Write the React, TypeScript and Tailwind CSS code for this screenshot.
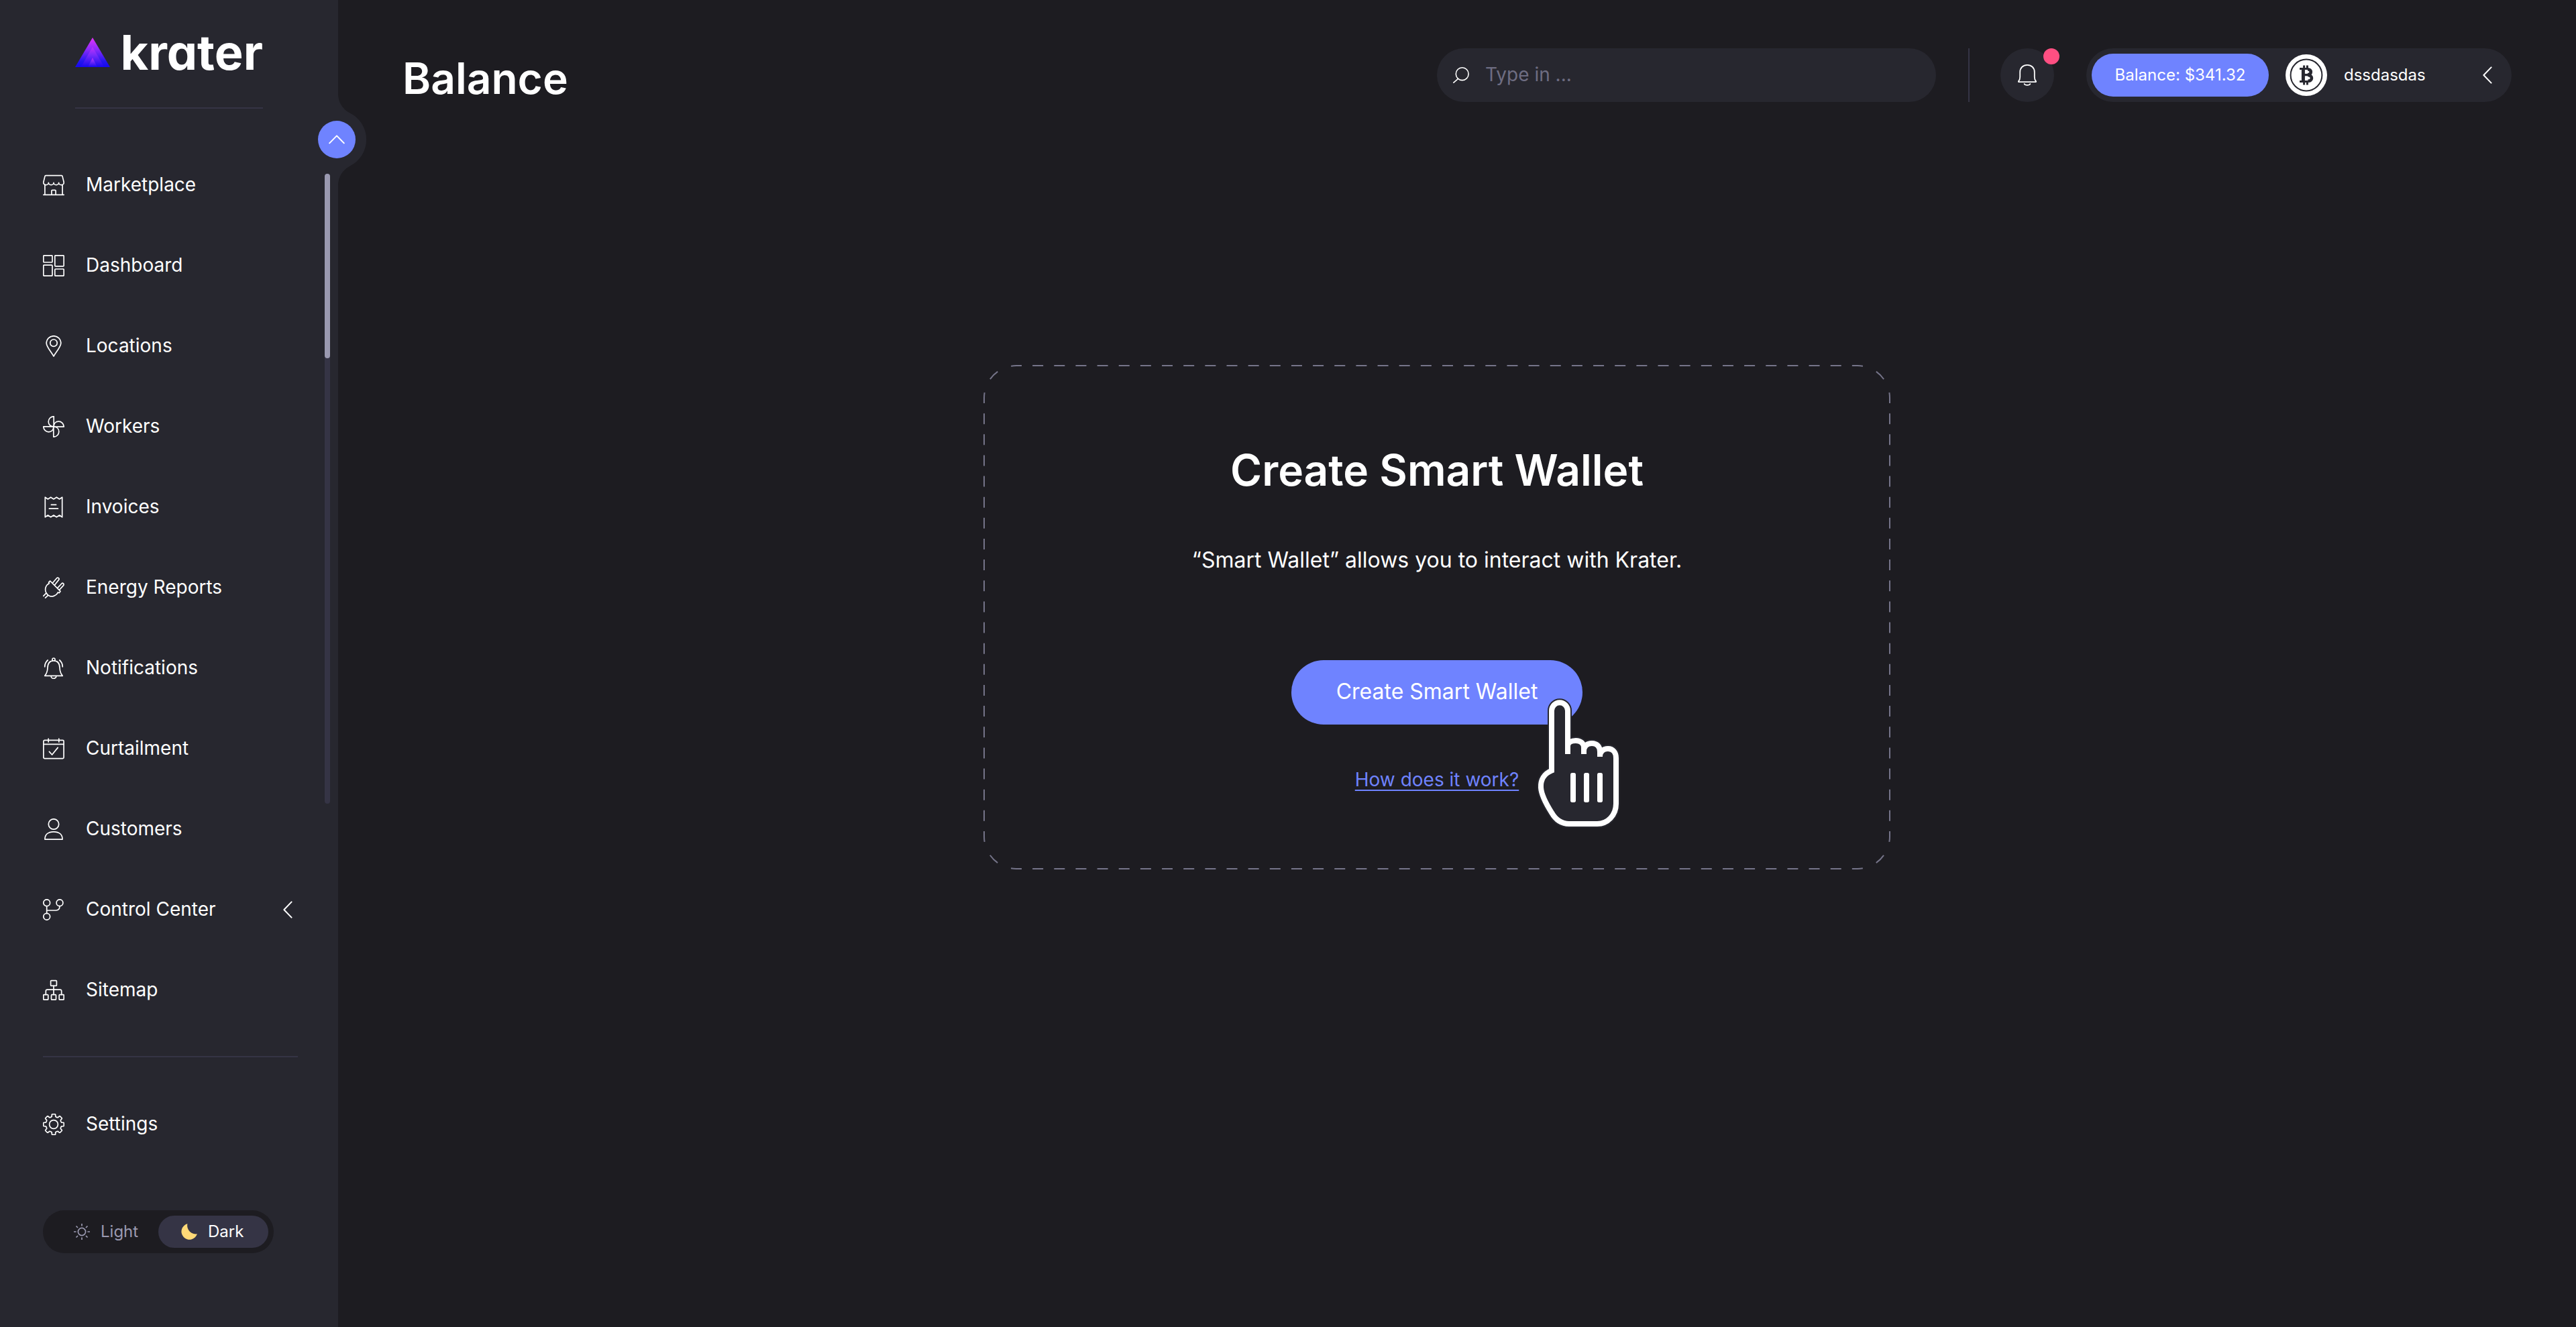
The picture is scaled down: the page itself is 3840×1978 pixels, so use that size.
import type { ReactNode } from "react";

function Icon({ children, size = 32, className = "size-8" }: { children: ReactNode; size?: number; className?: string }) {
  return (
    <svg
      viewBox={`0 0 ${size} ${size}`}
      className={`shrink-0 ${className}`}
      fill="none"
      stroke="currentColor"
      strokeWidth="1.7"
      strokeLinecap="round"
      strokeLinejoin="round"
      aria-hidden="true"
    >
      {children}
    </svg>
  );
}

function gearPath() {
  const point = (radius: number, degrees: number) => {
    const a = ((degrees - 90) * Math.PI) / 180;
    return `${(16 + radius * Math.cos(a)).toFixed(2)} ${(16 + radius * Math.sin(a)).toFixed(2)}`;
  };
  let d = "";
  for (let i = 0; i < 8; i++) {
    const t = i * 45;
    d += `${i === 0 ? "M" : "L"}${point(12.2, t - 13)}`;
    d += `L${point(14.4, t - 11)}Q${point(15.4, t - 10)} ${point(15.4, t - 7)}`;
    d += `L${point(15.4, t + 7)}Q${point(15.4, t + 10)} ${point(14.4, t + 11)}`;
    d += `L${point(12.2, t + 13)}Q${point(11, t + 22.5)} ${point(12.2, t + 32)}`;
  }
  return d + "Z";
}

const icons = {
  market: (
    <Icon>
      <path d="M4.2 1.6h23.6q1 0 1.2 1l2.2 9v.8a3.8 3.2 0 0 1-7.6 0 3.8 3.2 0 0 1-7.6 0 3.8 3.2 0 0 1-7.6 0 3.8 3.2 0 0 1-7.6 0v-.8l2.2-9q.2-1 1.2-1zM2.9 15.4v14.8M29.1 15.4v14.8M.8 30.4h30.4M12.9 30v-5.4q0-1.2 1.2-1.2h3.8q1.2 0 1.2 1.2V30" />
    </Icon>
  ),
  dashboard: (
    <Icon>
      <rect x=".8" y=".8" width="13.2" height="10.2" rx="1" />
      <rect x="17.8" y=".8" width="13.4" height="16" rx="1" />
      <rect x=".8" y="15.2" width="13.2" height="16" rx="1" />
      <rect x="17.8" y="21" width="13.4" height="10.2" rx="1" />
    </Icon>
  ),
  pin: (
    <Icon>
      <path d="M16 31C13.2 25.6 5.2 17 5.2 11.4a10.8 10.6 0 0 1 21.6 0C26.8 17 18.8 25.6 16 31z" />
      <circle cx="16" cy="11.2" r="5.2" />
    </Icon>
  ),
  fan: (
    <Icon>
      {["", "rotate(90 16 16)", "rotate(180 16 16)", "rotate(270 16 16)"].map((r) => (
        <path key={r} transform={r} d="M16.2 16V.8C11.2.8 8.2 4.8 8.2 8.6c0 4.2 3.2 7.2 8 7.4" />
      ))}
    </Icon>
  ),
  invoice: (
    <Icon>
      <path d="M3.3 1.2 7.4 4l4.3-2.8L16 4l4.3-2.8L24.6 4l4.1-2.8v29.6L24.6 28l-4.3 2.8L16 28l-4.3 2.8L7.4 28l-4.1 2.8zM12.4 12.4h7.2M9.4 18.2h13" />
    </Icon>
  ),
  plug: (
    <Icon>
      <path d="M9.4 9.6 8.6 8l2.2-2L26 21.4l-1.8 2.4-1.8-.8M9.4 9.6C4 12.4 2.4 18 4.6 23.2 6.8 28 12 30 16.2 28.4c2.8-1 5-2.8 6.2-5.4M4.4 24.6.8 28.4M7.4 27.6l-3.8 3.6M14.2 9.2l6.4-7.4a1.9 1.9 0 0 1 2.9 2.6l-6 7.6M21.6 16.6l6.2-6.6a1.9 1.9 0 0 1 2.8 2.6l-6.2 6.8" />
    </Icon>
  ),
  alarm: (
    <Icon>
      <path d="M2.8 27.4h26.4c-2.4-3-4-7-4.2-12.2C24.8 8.6 21.4 4.8 16 4.8S7.2 8.6 7 15.2c-.2 5.2-1.8 9.2-4.2 12.2zM14 4.8V3a2 2 0 0 1 4 0v1.8M12.2 28a3.8 3.4 0 0 0 7.6 0M7.2 4C4.4 6.4 2.8 10 2.7 14M24.8 4c2.8 2.4 4.4 6 4.5 10" />
    </Icon>
  ),
  calendar: (
    <Icon>
      <rect x=".9" y="3.4" width="30.2" height="27.2" rx="1.6" />
      <path d="M1 9.4h30M8.2 1.2V6M23.8 1.2V6M9.4 20.4l4.2 4.6 8.6-10.6" />
    </Icon>
  ),
  person: (
    <Icon>
      <circle cx="16" cy="8.5" r="7.7" />
      <path d="M2.9 31.1C2.9 24.4 7.4 19.8 16 19.8s13.1 4.6 13.1 11.3z" />
    </Icon>
  ),
  branch: (
    <Icon>
      <circle cx="5.7" cy="5.7" r="4.9" />
      <circle cx="25" cy="5.7" r="4.9" />
      <circle cx="5.7" cy="26.3" r="4.9" />
      <path d="M5.7 10.6v10.8M5.7 17h13.6c3.8 0 5.7-2.4 5.7-6.4" />
    </Icon>
  ),
  tree: (
    <Icon>
      <rect x="11.6" y="1.6" width="8.8" height="7.8" rx="1" />
      <rect x=".8" y="22.6" width="7" height="7.6" rx="1" />
      <rect x="12.5" y="22.6" width="7" height="7.6" rx="1" />
      <rect x="24.2" y="22.6" width="7" height="7.6" rx="1" />
      <path d="M16 9.4v13.2M4.3 22.6v-5.2q0-2.2 2.2-2.2h19q2.2 0 2.2 2.2v5.2" />
    </Icon>
  ),
  gear: (
    <Icon>
      <path d={gearPath()} />
      <circle cx="16" cy="16" r="6.4" />
    </Icon>
  ),
};

function ChevronLeft() {
  return (
    <svg viewBox="0 0 14 26" className="h-[26px] w-3.5 shrink-0" fill="none" stroke="currentColor" strokeWidth="2" strokeLinecap="round" strokeLinejoin="round" aria-hidden="true">
      <path d="M12.6 1.4 1.4 13l11.2 11.6" />
    </svg>
  );
}

const navItems: { label: string; icon: ReactNode; expandable?: boolean }[] = [
  { label: "Marketplace", icon: icons.market },
  { label: "Dashboard", icon: icons.dashboard },
  { label: "Locations", icon: icons.pin },
  { label: "Workers", icon: icons.fan },
  { label: "Invoices", icon: icons.invoice },
  { label: "Energy Reports", icon: icons.plug },
  { label: "Notifications", icon: icons.alarm },
  { label: "Curtailment", icon: icons.calendar },
  { label: "Customers", icon: icons.person },
  { label: "Control Center", icon: icons.branch, expandable: true },
  { label: "Sitemap", icon: icons.tree },
];

function NavItem({ label, icon, expandable }: { label: string; icon: ReactNode; expandable?: boolean }) {
  return (
    <a href="#" className="flex h-[120px] items-center gap-8 pr-[68px] pl-16">
      {icon}
      <span className="flex-1 pb-0.5 text-[28px] leading-10">{label}</span>
      {expandable && <ChevronLeft />}
    </a>
  );
}

function Logo() {
  return (
    <a href="#" aria-label="krater" className="mx-auto flex h-11 w-[280px] items-center justify-between">
      <svg viewBox="0 0 52 44" className="h-11 w-[52px]" aria-hidden="true">
        <defs>
          <linearGradient id="peak" x1="0" y1="0" x2="0" y2="1">
            <stop offset="0" stopColor="#e534f8" />
            <stop offset=".4" stopColor="#8c2bfa" />
            <stop offset=".8" stopColor="#2416ee" />
            <stop offset="1" stopColor="#1508ee" />
          </linearGradient>
          <linearGradient id="core" x1="0" y1="0" x2="0" y2="1">
            <stop offset="0" stopColor="#c032fb" />
            <stop offset=".4" stopColor="#7a2bfa" />
            <stop offset="1" stopColor="#1508ee" />
          </linearGradient>
        </defs>
        <path d="M26 0 52 44H0z" fill="url(#peak)" />
        <path d="M26 14 43.5 44h-35z" fill="url(#core)" />
        <path d="M26 30 33 44H19z" fill="url(#core)" />
      </svg>
      <span className="text-[72px] leading-none font-bold [font-feature-settings:'cv11']">krater</span>
    </a>
  );
}

function Sidebar() {
  return (
    <aside className="relative flex w-[504px] shrink-0 flex-col bg-[#27272f] pt-14 pb-[110px]">
      <Logo />
      <hr className="mx-auto mt-[60px] w-[280px] border-t-2 border-[#353445]" />

      <svg viewBox="0 0 44 136" className="absolute top-[140px] left-full h-[136px] w-11 overflow-visible" aria-hidden="true">
        <path d="M-1 0H0A32 32 0 0 0 17.7 28.6 44 44 0 0 1 17.7 107.4 32 32 0 0 0 0 136H-1z" fill="#27272f" />
      </svg>
      <button aria-label="Collapse sidebar" className="absolute top-[180px] -right-[26px] flex size-14 items-center justify-center rounded-full bg-[#6f83ff]">
        <svg viewBox="0 0 24 14" className="h-3.5 w-6" fill="none" stroke="currentColor" strokeWidth="2" strokeLinecap="round" strokeLinejoin="round" aria-hidden="true">
          <path d="M1.2 12.4 12 1.4l10.8 11" />
        </svg>
      </button>

      <div className="absolute top-[259px] right-3 h-[939px] w-2 rounded-full bg-[#353445]">
        <div className="h-[275px] rounded-full bg-[#9a99b0]" />
      </div>

      <nav className="mt-[54px] flex flex-col">
        {navItems.map((item) => (
          <NavItem key={item.label} {...item} />
        ))}
        <hr className="mt-[38px] mr-[60px] mb-10 ml-16 border-t-2 border-[#353445]" />
        <NavItem label="Settings" icon={icons.gear} />
      </nav>

      <div role="group" aria-label="Theme" className="mt-[68px] ml-16 flex h-16 w-[344px] items-center rounded-full bg-[#1d1c21] p-2 text-2xl">
        <button aria-pressed="false" className="flex h-12 w-1/2 items-center gap-4 rounded-full pl-[38px] text-[#9a99b0]">
          <Icon size={24} className="size-6">
            <circle cx="12" cy="12" r="5.6" />
            <path strokeLinecap="butt" d="M12 0v3.6M12 20.4V24M0 12h3.6M20.4 12H24M3.5 3.5 6 6M18 18l2.5 2.5M20.5 3.5 18 6M6 18l-2.5 2.5" />
          </Icon>
          Light
        </button>
        <button aria-pressed="true" className="flex h-12 w-1/2 items-center gap-4 rounded-full bg-[#353445] pl-[34px]">
          <svg viewBox="0 0 24 24" className="size-6 shrink-0" fill="#ffd977" aria-hidden="true">
            <path d="M9.4.1A12 12 0 1 0 23.9 15.3 12.8 12.8 0 0 1 9.4.1z" />
          </svg>
          Dark
        </button>
      </div>
    </aside>
  );
}

function BitcoinAvatar() {
  return (
    <svg viewBox="0 0 64 64" className="size-16 shrink-0" fill="none" aria-hidden="true">
      <circle cx="32" cy="32" r="31" fill="#fff" />
      <circle cx="32" cy="32" r="23.4" stroke="#27272f" strokeWidth="2" />
      <g stroke="#27272f">
        <path strokeWidth="3" d="M28.6 17.4v5M33.4 17.4v5M28.6 41.6v5M33.4 41.6v5" />
        <path strokeWidth="3" d="M22 22.4h12.4M22 41.6h12.8" />
        <path strokeWidth="5" d="M27.4 22v20" />
        <path strokeWidth="3.4" d="M27 31.6h7.6" />
        <path strokeWidth="4.6" d="M34 23.2c6.4.2 6.4 8 0 8.2M34.4 32c7.4.4 7.4 8.6 0 8.8" />
      </g>
    </svg>
  );
}

function Header() {
  return (
    <header className="flex items-start gap-12">
      <h1 className="flex-1 text-[64px] leading-[90px] font-semibold">Balance</h1>
      <label className="flex h-20 w-[744px] items-center gap-6 rounded-full bg-[#27272f] px-6">
        <svg viewBox="0 0 24 24" className="size-6 shrink-0" fill="none" stroke="currentColor" strokeWidth="1.6" strokeLinecap="round" aria-hidden="true">
          <circle cx="13.7" cy="10.2" r="9.4" />
          <path d="M7.6 17.4.9 23.2" />
        </svg>
        <input type="search" aria-label="Search" placeholder="Type in ..." className="w-full bg-transparent pb-0.5 text-[28px] outline-none placeholder:text-[#6e6d82]" />
      </label>
      <div className="h-20 w-0.5 bg-[#353445]" />
      <button aria-label="Notifications" className="relative -ml-0.5 flex size-20 items-center justify-center rounded-full bg-[#27272f]">
        <svg viewBox="0 0 28 32" className="h-8 w-7" fill="none" stroke="currentColor" strokeWidth="1.8" strokeLinecap="round" strokeLinejoin="round" aria-hidden="true">
          <path d="M1 25.2c1.4-1.4 2.2-3.4 2.2-6.4v-7.4C3.2 5 7.8.9 14 .9S24.8 5 24.8 11.4v7.4c0 3 .8 5 2.2 6.4q.4 1-.8 1H1.8q-1.2 0-.8-1z" />
          <path d="M9.6 29c.8 2.4 8 2.4 8.800 0" />
        </svg>
        <span className="absolute top-0 -right-2 size-6 rounded-full bg-[#ff4f82]" />
      </button>
      <div className="flex h-20 w-[634px] items-center gap-6 rounded-full bg-[#27272f] pr-[29px] pl-2 text-2xl">
        <button className="h-16 w-[264px] shrink-0 rounded-full bg-[#6f83ff]">Balance: $341.32</button>
        <button className="flex flex-1 items-center gap-6 text-left">
          <BitcoinAvatar />
          <span className="flex-1">dssdasdas</span>
          <ChevronLeft />
        </button>
      </div>
    </header>
  );
}

function DashedFrame() {
  const horizontal = { strokeDasharray: "16 16.15", strokeDashoffset: 8 };
  const vertical = { strokeDasharray: "16 15.14", strokeDashoffset: 8 };
  const corner = { strokeDasharray: "16 21.7", strokeDashoffset: 8 };
  return (
    <svg viewBox="0 0 1352 752" preserveAspectRatio="none" className="pointer-events-none absolute inset-0 size-full" fill="none" stroke="#757489" strokeWidth="2" aria-hidden="true">
      <path {...horizontal} d="M49 1H1303" />
      <path {...horizontal} d="M49 751H1303" />
      <path {...vertical} d="M1 49V703" />
      <path {...vertical} d="M1351 49V703" />
      <path {...corner} d="M1 49A48 48 0 0 1 49 1" />
      <path {...corner} d="M1303 1A48 48 0 0 1 1351 49" />
      <path {...corner} d="M1351 703A48 48 0 0 1 1303 751" />
      <path {...corner} d="M49 751A48 48 0 0 1 1 703" />
    </svg>
  );
}

function PointingHand() {
  const palm =
    "M294 312V118a36 36 0 0 0-72 0V386C188 400 172 428 174 462c2 32 24 74 48 112 18 32 44 50 78 50h126c46 0 84-38 84-90V330c0-26-14-42-36-42-20 0-36 12-36 36v-22c0-24-14-38-36-38-20 0-36 10-36 36v-16c0-20-14-32-36-32-20 0-36 8-36 24z";
  return (
    <svg viewBox="162 66 360 570" className="pointer-events-none absolute top-[58px] left-[368px] h-[190px] w-[120px] overflow-visible" fill="none" aria-hidden="true">
      <path d={palm} stroke="#27272f" strokeWidth="36" />
      <path d={palm} fill="#27272f" />
      <path
        stroke="#fff"
        strokeWidth="24"
        d="M294 312V118a36 36 0 0 0-72 0V386C188 400 172 428 174 462c2 32 24 74 48 112 18 32 44 50 78 50h126c46 0 84-38 84-90V330c0-26-14-42-36-42-20 0-36 12-36 36M438 324v-22c0-24-14-38-36-38-20 0-36 10-36 36M366 312v-28c0-20-14-32-36-32-20 0-36 8-36 24"
      />
      <g fill="#fff">
        <rect x="306" y="396" width="24" height="132" rx="8" />
        <rect x="366" y="396" width="24" height="132" rx="8" />
        <rect x="426" y="396" width="24" height="132" rx="8" />
      </g>
    </svg>
  );
}

function WalletCard() {
  return (
    <section className="relative flex w-[1352px] max-w-full flex-col items-center pt-29 pb-[114px]">
      <DashedFrame />
      <h2 className="text-[64px] leading-[82px] font-semibold">Create Smart Wallet</h2>
      <p className="mt-17 text-[32px] leading-[50px]">“Smart Wallet” allows you to interact with Krater.</p>
      <div className="relative mt-[124px]">
        <button className="h-24 w-[434px] rounded-full bg-[#6f83ff] pb-0.5 text-[32px]">Create Smart Wallet</button>
        <PointingHand />
      </div>
      <a href="#" className="mt-[62px] text-[28px] leading-10 text-[#6f83ff] underline decoration-2 underline-offset-[5px]">
        How does it work?
      </a>
    </section>
  );
}

export default function App() {
  return (
    <div className="flex min-h-screen bg-[#1d1c21] font-['Inter',sans-serif] text-white">
      <Sidebar />
      <main className="min-w-0 flex-1 px-24 pt-[72px]">
        <Header />
        <div className="mt-[382px] flex justify-center pr-[60px]">
          <WalletCard />
        </div>
      </main>
    </div>
  );
}
